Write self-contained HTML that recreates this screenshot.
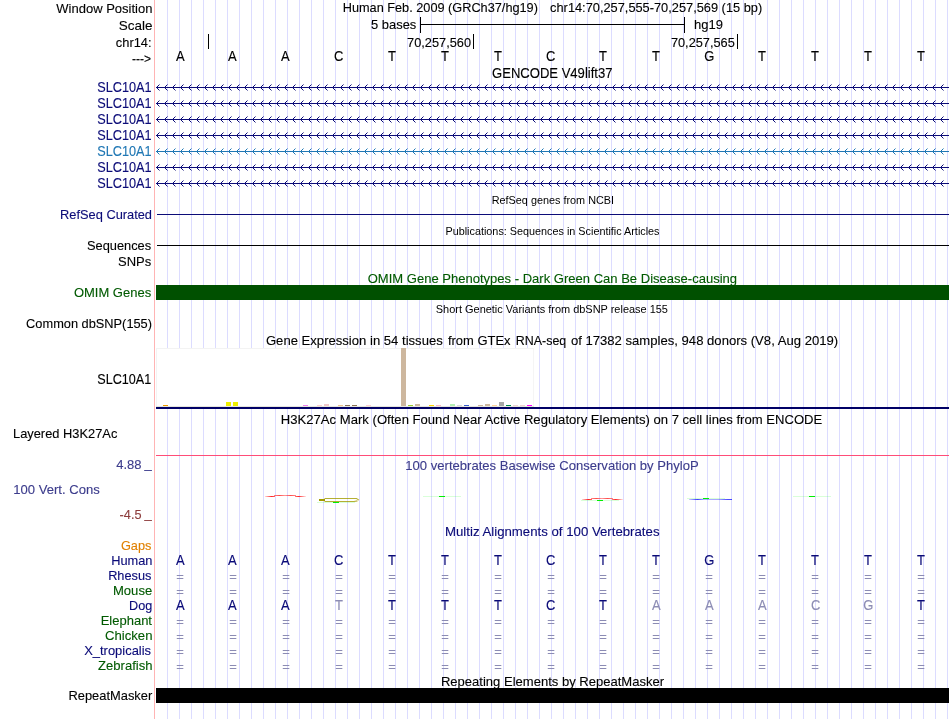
<!DOCTYPE html>
<html lang="en"><head><meta charset="utf-8"><title>UCSC Genome Browser - chr14:70,257,555-70,257,569</title>
<style>
html,body{margin:0;padding:0;background:#fff;overflow:hidden}
svg{display:block;will-change:transform;font-family:"Liberation Sans",sans-serif;font-size:13px}
rect{shape-rendering:crispEdges}
</style></head><body>
<svg role="img" aria-label="UCSC Genome Browser hg19 chr14:70,257,555-70,257,569" width="950" height="719" viewBox="0 0 950 719">
<g id="guides" aria-label="guidelines">
<path d="M167 0V719M179 0V719M191 0V719M203 0V719M215 0V719M227 0V719M239 0V719M251 0V719M263 0V719M275 0V719M287 0V719M299 0V719M311 0V719M323 0V719M335 0V719M347 0V719M359 0V719M371 0V719M383 0V719M395 0V719M407 0V719M419 0V719M431 0V719M443 0V719M455 0V719M467 0V719M479 0V719M491 0V719M503 0V719M515 0V719M527 0V719M539 0V719M551 0V719M563 0V719M575 0V719M587 0V719M599 0V719M611 0V719M623 0V719M635 0V719M647 0V719M659 0V719M671 0V719M683 0V719M695 0V719M707 0V719M719 0V719M731 0V719M743 0V719M755 0V719M767 0V719M779 0V719M791 0V719M803 0V719M815 0V719M827 0V719M839 0V719M851 0V719M863 0V719M875 0V719M887 0V719M899 0V719M911 0V719M923 0V719M935 0V719M947 0V719" stroke="#dcdcff" stroke-width="1" fill="none" transform="translate(.5 0)"/>
<rect x="154" y="0" width="1" height="719" fill="#ffb4b4"/>
</g>
<g id="track-ruler" aria-label="Base Position">
<text x="56.29" y="13" textLength="96.11" lengthAdjust="spacingAndGlyphs" stroke="#000" stroke-width="0.12">Window Position</text>
<text y="12" stroke="#000" stroke-width="0.12"><tspan x="342.70" textLength="195.25" lengthAdjust="spacingAndGlyphs">Human Feb. 2009 (GRCh37/hg19)</tspan> <tspan x="550.10" textLength="212.09" lengthAdjust="spacingAndGlyphs">chr14:70,257,555-70,257,569 (15 bp)</tspan></text>
<text x="118.87" y="30" textLength="33.73" lengthAdjust="spacingAndGlyphs" stroke="#000" stroke-width="0.12">Scale</text>
<text x="371.05" y="29" textLength="45.25" lengthAdjust="spacingAndGlyphs" stroke="#000" stroke-width="0.12">5 bases</text>
<rect x="420" y="24" width="265" height="1" fill="#000"/>
<rect x="420" y="17" width="1" height="16" fill="#000"/>
<rect x="684" y="17" width="1" height="16" fill="#000"/>
<text x="694.00" y="29" textLength="28.92" lengthAdjust="spacingAndGlyphs" stroke="#000" stroke-width="0.12">hg19</text>
<text x="115.86" y="47" textLength="35.74" lengthAdjust="spacingAndGlyphs" stroke="#000" stroke-width="0.12">chr14:</text>
<rect x="208" y="34" width="1" height="15" fill="#000"/>
<text x="407.12" y="47" textLength="63.88" lengthAdjust="spacingAndGlyphs" stroke="#000" stroke-width="0.12">70,257,560</text>
<rect x="473" y="34" width="1" height="15" fill="#000"/>
<text x="670.92" y="47" textLength="63.88" lengthAdjust="spacingAndGlyphs" stroke="#000" stroke-width="0.12">70,257,565</text>
<rect x="737" y="34" width="1" height="15" fill="#000"/>
<text x="132.01" y="63" textLength="18.99" lengthAdjust="spacingAndGlyphs" stroke="#000" stroke-width="0.12">---&gt;</text>
<text transform="translate(176.06 61) scale(1 1.08)" stroke="#000" stroke-width="0.12">A</text>
<text transform="translate(228.06 61) scale(1 1.08)" stroke="#000" stroke-width="0.12">A</text>
<text transform="translate(281.06 61) scale(1 1.08)" stroke="#000" stroke-width="0.12">A</text>
<text transform="translate(334.10 61) scale(1 1.08)" stroke="#000" stroke-width="0.12">C</text>
<text transform="translate(388.02 61) scale(1 1.08)" stroke="#000" stroke-width="0.12">T</text>
<text transform="translate(441.02 61) scale(1 1.08)" stroke="#000" stroke-width="0.12">T</text>
<text transform="translate(494.02 61) scale(1 1.08)" stroke="#000" stroke-width="0.12">T</text>
<text transform="translate(546.10 61) scale(1 1.08)" stroke="#000" stroke-width="0.12">C</text>
<text transform="translate(599.02 61) scale(1 1.08)" stroke="#000" stroke-width="0.12">T</text>
<text transform="translate(652.02 61) scale(1 1.08)" stroke="#000" stroke-width="0.12">T</text>
<text transform="translate(704.14 61) scale(1 1.08)" stroke="#000" stroke-width="0.12">G</text>
<text transform="translate(758.02 61) scale(1 1.08)" stroke="#000" stroke-width="0.12">T</text>
<text transform="translate(811.02 61) scale(1 1.08)" stroke="#000" stroke-width="0.12">T</text>
<text transform="translate(864.02 61) scale(1 1.08)" stroke="#000" stroke-width="0.12">T</text>
<text transform="translate(917.02 61) scale(1 1.08)" stroke="#000" stroke-width="0.12">T</text>
</g>
<g id="track-gencode" aria-label="GENCODE V49lift37">
<text transform="translate(492.03 78) scale(1 1.06)" textLength="120.44" lengthAdjust="spacingAndGlyphs" stroke="#000" stroke-width="0.12">GENCODE V49lift37</text>
<text transform="translate(97.24 92) scale(1 1.06)" textLength="54.26" lengthAdjust="spacingAndGlyphs" fill="#0c0c78" stroke="#0c0c78" stroke-width="0.12">SLC10A1</text>
<rect x="156" y="87" width="793" height="1" fill="#0c0c78"/>
<path d="M159.5 84.5L156.5 87.5L159.5 90.5M167.5 84.5L164.5 87.5L167.5 90.5M175.5 84.5L172.5 87.5L175.5 90.5M183.5 84.5L180.5 87.5L183.5 90.5M191.5 84.5L188.5 87.5L191.5 90.5M199.5 84.5L196.5 87.5L199.5 90.5M207.5 84.5L204.5 87.5L207.5 90.5M215.5 84.5L212.5 87.5L215.5 90.5M223.5 84.5L220.5 87.5L223.5 90.5M231.5 84.5L228.5 87.5L231.5 90.5M239.5 84.5L236.5 87.5L239.5 90.5M247.5 84.5L244.5 87.5L247.5 90.5M255.5 84.5L252.5 87.5L255.5 90.5M263.5 84.5L260.5 87.5L263.5 90.5M271.5 84.5L268.5 87.5L271.5 90.5M279.5 84.5L276.5 87.5L279.5 90.5M287.5 84.5L284.5 87.5L287.5 90.5M295.5 84.5L292.5 87.5L295.5 90.5M303.5 84.5L300.5 87.5L303.5 90.5M311.5 84.5L308.5 87.5L311.5 90.5M319.5 84.5L316.5 87.5L319.5 90.5M327.5 84.5L324.5 87.5L327.5 90.5M335.5 84.5L332.5 87.5L335.5 90.5M343.5 84.5L340.5 87.5L343.5 90.5M351.5 84.5L348.5 87.5L351.5 90.5M359.5 84.5L356.5 87.5L359.5 90.5M367.5 84.5L364.5 87.5L367.5 90.5M375.5 84.5L372.5 87.5L375.5 90.5M383.5 84.5L380.5 87.5L383.5 90.5M391.5 84.5L388.5 87.5L391.5 90.5M399.5 84.5L396.5 87.5L399.5 90.5M407.5 84.5L404.5 87.5L407.5 90.5M415.5 84.5L412.5 87.5L415.5 90.5M423.5 84.5L420.5 87.5L423.5 90.5M431.5 84.5L428.5 87.5L431.5 90.5M439.5 84.5L436.5 87.5L439.5 90.5M447.5 84.5L444.5 87.5L447.5 90.5M455.5 84.5L452.5 87.5L455.5 90.5M463.5 84.5L460.5 87.5L463.5 90.5M471.5 84.5L468.5 87.5L471.5 90.5M479.5 84.5L476.5 87.5L479.5 90.5M487.5 84.5L484.5 87.5L487.5 90.5M495.5 84.5L492.5 87.5L495.5 90.5M503.5 84.5L500.5 87.5L503.5 90.5M511.5 84.5L508.5 87.5L511.5 90.5M519.5 84.5L516.5 87.5L519.5 90.5M527.5 84.5L524.5 87.5L527.5 90.5M535.5 84.5L532.5 87.5L535.5 90.5M543.5 84.5L540.5 87.5L543.5 90.5M551.5 84.5L548.5 87.5L551.5 90.5M559.5 84.5L556.5 87.5L559.5 90.5M567.5 84.5L564.5 87.5L567.5 90.5M575.5 84.5L572.5 87.5L575.5 90.5M583.5 84.5L580.5 87.5L583.5 90.5M591.5 84.5L588.5 87.5L591.5 90.5M599.5 84.5L596.5 87.5L599.5 90.5M607.5 84.5L604.5 87.5L607.5 90.5M615.5 84.5L612.5 87.5L615.5 90.5M623.5 84.5L620.5 87.5L623.5 90.5M631.5 84.5L628.5 87.5L631.5 90.5M639.5 84.5L636.5 87.5L639.5 90.5M647.5 84.5L644.5 87.5L647.5 90.5M655.5 84.5L652.5 87.5L655.5 90.5M663.5 84.5L660.5 87.5L663.5 90.5M671.5 84.5L668.5 87.5L671.5 90.5M679.5 84.5L676.5 87.5L679.5 90.5M687.5 84.5L684.5 87.5L687.5 90.5M695.5 84.5L692.5 87.5L695.5 90.5M703.5 84.5L700.5 87.5L703.5 90.5M711.5 84.5L708.5 87.5L711.5 90.5M719.5 84.5L716.5 87.5L719.5 90.5M727.5 84.5L724.5 87.5L727.5 90.5M735.5 84.5L732.5 87.5L735.5 90.5M743.5 84.5L740.5 87.5L743.5 90.5M751.5 84.5L748.5 87.5L751.5 90.5M759.5 84.5L756.5 87.5L759.5 90.5M767.5 84.5L764.5 87.5L767.5 90.5M775.5 84.5L772.5 87.5L775.5 90.5M783.5 84.5L780.5 87.5L783.5 90.5M791.5 84.5L788.5 87.5L791.5 90.5M799.5 84.5L796.5 87.5L799.5 90.5M807.5 84.5L804.5 87.5L807.5 90.5M815.5 84.5L812.5 87.5L815.5 90.5M823.5 84.5L820.5 87.5L823.5 90.5M831.5 84.5L828.5 87.5L831.5 90.5M839.5 84.5L836.5 87.5L839.5 90.5M847.5 84.5L844.5 87.5L847.5 90.5M855.5 84.5L852.5 87.5L855.5 90.5M863.5 84.5L860.5 87.5L863.5 90.5M871.5 84.5L868.5 87.5L871.5 90.5M879.5 84.5L876.5 87.5L879.5 90.5M887.5 84.5L884.5 87.5L887.5 90.5M895.5 84.5L892.5 87.5L895.5 90.5M903.5 84.5L900.5 87.5L903.5 90.5M911.5 84.5L908.5 87.5L911.5 90.5M919.5 84.5L916.5 87.5L919.5 90.5M927.5 84.5L924.5 87.5L927.5 90.5M935.5 84.5L932.5 87.5L935.5 90.5M943.5 84.5L940.5 87.5L943.5 90.5" stroke="#0c0c78" fill="none"/>
<text transform="translate(97.24 108) scale(1 1.06)" textLength="54.26" lengthAdjust="spacingAndGlyphs" fill="#0c0c78" stroke="#0c0c78" stroke-width="0.12">SLC10A1</text>
<rect x="156" y="103" width="793" height="1" fill="#0c0c78"/>
<path d="M159.5 100.5L156.5 103.5L159.5 106.5M167.5 100.5L164.5 103.5L167.5 106.5M175.5 100.5L172.5 103.5L175.5 106.5M183.5 100.5L180.5 103.5L183.5 106.5M191.5 100.5L188.5 103.5L191.5 106.5M199.5 100.5L196.5 103.5L199.5 106.5M207.5 100.5L204.5 103.5L207.5 106.5M215.5 100.5L212.5 103.5L215.5 106.5M223.5 100.5L220.5 103.5L223.5 106.5M231.5 100.5L228.5 103.5L231.5 106.5M239.5 100.5L236.5 103.5L239.5 106.5M247.5 100.5L244.5 103.5L247.5 106.5M255.5 100.5L252.5 103.5L255.5 106.5M263.5 100.5L260.5 103.5L263.5 106.5M271.5 100.5L268.5 103.5L271.5 106.5M279.5 100.5L276.5 103.5L279.5 106.5M287.5 100.5L284.5 103.5L287.5 106.5M295.5 100.5L292.5 103.5L295.5 106.5M303.5 100.5L300.5 103.5L303.5 106.5M311.5 100.5L308.5 103.5L311.5 106.5M319.5 100.5L316.5 103.5L319.5 106.5M327.5 100.5L324.5 103.5L327.5 106.5M335.5 100.5L332.5 103.5L335.5 106.5M343.5 100.5L340.5 103.5L343.5 106.5M351.5 100.5L348.5 103.5L351.5 106.5M359.5 100.5L356.5 103.5L359.5 106.5M367.5 100.5L364.5 103.5L367.5 106.5M375.5 100.5L372.5 103.5L375.5 106.5M383.5 100.5L380.5 103.5L383.5 106.5M391.5 100.5L388.5 103.5L391.5 106.5M399.5 100.5L396.5 103.5L399.5 106.5M407.5 100.5L404.5 103.5L407.5 106.5M415.5 100.5L412.5 103.5L415.5 106.5M423.5 100.5L420.5 103.5L423.5 106.5M431.5 100.5L428.5 103.5L431.5 106.5M439.5 100.5L436.5 103.5L439.5 106.5M447.5 100.5L444.5 103.5L447.5 106.5M455.5 100.5L452.5 103.5L455.5 106.5M463.5 100.5L460.5 103.5L463.5 106.5M471.5 100.5L468.5 103.5L471.5 106.5M479.5 100.5L476.5 103.5L479.5 106.5M487.5 100.5L484.5 103.5L487.5 106.5M495.5 100.5L492.5 103.5L495.5 106.5M503.5 100.5L500.5 103.5L503.5 106.5M511.5 100.5L508.5 103.5L511.5 106.5M519.5 100.5L516.5 103.5L519.5 106.5M527.5 100.5L524.5 103.5L527.5 106.5M535.5 100.5L532.5 103.5L535.5 106.5M543.5 100.5L540.5 103.5L543.5 106.5M551.5 100.5L548.5 103.5L551.5 106.5M559.5 100.5L556.5 103.5L559.5 106.5M567.5 100.5L564.5 103.5L567.5 106.5M575.5 100.5L572.5 103.5L575.5 106.5M583.5 100.5L580.5 103.5L583.5 106.5M591.5 100.5L588.5 103.5L591.5 106.5M599.5 100.5L596.5 103.5L599.5 106.5M607.5 100.5L604.5 103.5L607.5 106.5M615.5 100.5L612.5 103.5L615.5 106.5M623.5 100.5L620.5 103.5L623.5 106.5M631.5 100.5L628.5 103.5L631.5 106.5M639.5 100.5L636.5 103.5L639.5 106.5M647.5 100.5L644.5 103.5L647.5 106.5M655.5 100.5L652.5 103.5L655.5 106.5M663.5 100.5L660.5 103.5L663.5 106.5M671.5 100.5L668.5 103.5L671.5 106.5M679.5 100.5L676.5 103.5L679.5 106.5M687.5 100.5L684.5 103.5L687.5 106.5M695.5 100.5L692.5 103.5L695.5 106.5M703.5 100.5L700.5 103.5L703.5 106.5M711.5 100.5L708.5 103.5L711.5 106.5M719.5 100.5L716.5 103.5L719.5 106.5M727.5 100.5L724.5 103.5L727.5 106.5M735.5 100.5L732.5 103.5L735.5 106.5M743.5 100.5L740.5 103.5L743.5 106.5M751.5 100.5L748.5 103.5L751.5 106.5M759.5 100.5L756.5 103.5L759.5 106.5M767.5 100.5L764.5 103.5L767.5 106.5M775.5 100.5L772.5 103.5L775.5 106.5M783.5 100.5L780.5 103.5L783.5 106.5M791.5 100.5L788.5 103.5L791.5 106.5M799.5 100.5L796.5 103.5L799.5 106.5M807.5 100.5L804.5 103.5L807.5 106.5M815.5 100.5L812.5 103.5L815.5 106.5M823.5 100.5L820.5 103.5L823.5 106.5M831.5 100.5L828.5 103.5L831.5 106.5M839.5 100.5L836.5 103.5L839.5 106.5M847.5 100.5L844.5 103.5L847.5 106.5M855.5 100.5L852.5 103.5L855.5 106.5M863.5 100.5L860.5 103.5L863.5 106.5M871.5 100.5L868.5 103.5L871.5 106.5M879.5 100.5L876.5 103.5L879.5 106.5M887.5 100.5L884.5 103.5L887.5 106.5M895.5 100.5L892.5 103.5L895.5 106.5M903.5 100.5L900.5 103.5L903.5 106.5M911.5 100.5L908.5 103.5L911.5 106.5M919.5 100.5L916.5 103.5L919.5 106.5M927.5 100.5L924.5 103.5L927.5 106.5M935.5 100.5L932.5 103.5L935.5 106.5M943.5 100.5L940.5 103.5L943.5 106.5" stroke="#0c0c78" fill="none"/>
<text transform="translate(97.24 124) scale(1 1.06)" textLength="54.26" lengthAdjust="spacingAndGlyphs" fill="#0c0c78" stroke="#0c0c78" stroke-width="0.12">SLC10A1</text>
<rect x="156" y="119" width="793" height="1" fill="#0c0c78"/>
<path d="M159.5 116.5L156.5 119.5L159.5 122.5M167.5 116.5L164.5 119.5L167.5 122.5M175.5 116.5L172.5 119.5L175.5 122.5M183.5 116.5L180.5 119.5L183.5 122.5M191.5 116.5L188.5 119.5L191.5 122.5M199.5 116.5L196.5 119.5L199.5 122.5M207.5 116.5L204.5 119.5L207.5 122.5M215.5 116.5L212.5 119.5L215.5 122.5M223.5 116.5L220.5 119.5L223.5 122.5M231.5 116.5L228.5 119.5L231.5 122.5M239.5 116.5L236.5 119.5L239.5 122.5M247.5 116.5L244.5 119.5L247.5 122.5M255.5 116.5L252.5 119.5L255.5 122.5M263.5 116.5L260.5 119.5L263.5 122.5M271.5 116.5L268.5 119.5L271.5 122.5M279.5 116.5L276.5 119.5L279.5 122.5M287.5 116.5L284.5 119.5L287.5 122.5M295.5 116.5L292.5 119.5L295.5 122.5M303.5 116.5L300.5 119.5L303.5 122.5M311.5 116.5L308.5 119.5L311.5 122.5M319.5 116.5L316.5 119.5L319.5 122.5M327.5 116.5L324.5 119.5L327.5 122.5M335.5 116.5L332.5 119.5L335.5 122.5M343.5 116.5L340.5 119.5L343.5 122.5M351.5 116.5L348.5 119.5L351.5 122.5M359.5 116.5L356.5 119.5L359.5 122.5M367.5 116.5L364.5 119.5L367.5 122.5M375.5 116.5L372.5 119.5L375.5 122.5M383.5 116.5L380.5 119.5L383.5 122.5M391.5 116.5L388.5 119.5L391.5 122.5M399.5 116.5L396.5 119.5L399.5 122.5M407.5 116.5L404.5 119.5L407.5 122.5M415.5 116.5L412.5 119.5L415.5 122.5M423.5 116.5L420.5 119.5L423.5 122.5M431.5 116.5L428.5 119.5L431.5 122.5M439.5 116.5L436.5 119.5L439.5 122.5M447.5 116.5L444.5 119.5L447.5 122.5M455.5 116.5L452.5 119.5L455.5 122.5M463.5 116.5L460.5 119.5L463.5 122.5M471.5 116.5L468.5 119.5L471.5 122.5M479.5 116.5L476.5 119.5L479.5 122.5M487.5 116.5L484.5 119.5L487.5 122.5M495.5 116.5L492.5 119.5L495.5 122.5M503.5 116.5L500.5 119.5L503.5 122.5M511.5 116.5L508.5 119.5L511.5 122.5M519.5 116.5L516.5 119.5L519.5 122.5M527.5 116.5L524.5 119.5L527.5 122.5M535.5 116.5L532.5 119.5L535.5 122.5M543.5 116.5L540.5 119.5L543.5 122.5M551.5 116.5L548.5 119.5L551.5 122.5M559.5 116.5L556.5 119.5L559.5 122.5M567.5 116.5L564.5 119.5L567.5 122.5M575.5 116.5L572.5 119.5L575.5 122.5M583.5 116.5L580.5 119.5L583.5 122.5M591.5 116.5L588.5 119.5L591.5 122.5M599.5 116.5L596.5 119.5L599.5 122.5M607.5 116.5L604.5 119.5L607.5 122.5M615.5 116.5L612.5 119.5L615.5 122.5M623.5 116.5L620.5 119.5L623.5 122.5M631.5 116.5L628.5 119.5L631.5 122.5M639.5 116.5L636.5 119.5L639.5 122.5M647.5 116.5L644.5 119.5L647.5 122.5M655.5 116.5L652.5 119.5L655.5 122.5M663.5 116.5L660.5 119.5L663.5 122.5M671.5 116.5L668.5 119.5L671.5 122.5M679.5 116.5L676.5 119.5L679.5 122.5M687.5 116.5L684.5 119.5L687.5 122.5M695.5 116.5L692.5 119.5L695.5 122.5M703.5 116.5L700.5 119.5L703.5 122.5M711.5 116.5L708.5 119.5L711.5 122.5M719.5 116.5L716.5 119.5L719.5 122.5M727.5 116.5L724.5 119.5L727.5 122.5M735.5 116.5L732.5 119.5L735.5 122.5M743.5 116.5L740.5 119.5L743.5 122.5M751.5 116.5L748.5 119.5L751.5 122.5M759.5 116.5L756.5 119.5L759.5 122.5M767.5 116.5L764.5 119.5L767.5 122.5M775.5 116.5L772.5 119.5L775.5 122.5M783.5 116.5L780.5 119.5L783.5 122.5M791.5 116.5L788.5 119.5L791.5 122.5M799.5 116.5L796.5 119.5L799.5 122.5M807.5 116.5L804.5 119.5L807.5 122.5M815.5 116.5L812.5 119.5L815.5 122.5M823.5 116.5L820.5 119.5L823.5 122.5M831.5 116.5L828.5 119.5L831.5 122.5M839.5 116.5L836.5 119.5L839.5 122.5M847.5 116.5L844.5 119.5L847.5 122.5M855.5 116.5L852.5 119.5L855.5 122.5M863.5 116.5L860.5 119.5L863.5 122.5M871.5 116.5L868.5 119.5L871.5 122.5M879.5 116.5L876.5 119.5L879.5 122.5M887.5 116.5L884.5 119.5L887.5 122.5M895.5 116.5L892.5 119.5L895.5 122.5M903.5 116.5L900.5 119.5L903.5 122.5M911.5 116.5L908.5 119.5L911.5 122.5M919.5 116.5L916.5 119.5L919.5 122.5M927.5 116.5L924.5 119.5L927.5 122.5M935.5 116.5L932.5 119.5L935.5 122.5M943.5 116.5L940.5 119.5L943.5 122.5" stroke="#0c0c78" fill="none"/>
<text transform="translate(97.24 140) scale(1 1.06)" textLength="54.26" lengthAdjust="spacingAndGlyphs" fill="#0c0c78" stroke="#0c0c78" stroke-width="0.12">SLC10A1</text>
<rect x="156" y="135" width="793" height="1" fill="#0c0c78"/>
<path d="M159.5 132.5L156.5 135.5L159.5 138.5M167.5 132.5L164.5 135.5L167.5 138.5M175.5 132.5L172.5 135.5L175.5 138.5M183.5 132.5L180.5 135.5L183.5 138.5M191.5 132.5L188.5 135.5L191.5 138.5M199.5 132.5L196.5 135.5L199.5 138.5M207.5 132.5L204.5 135.5L207.5 138.5M215.5 132.5L212.5 135.5L215.5 138.5M223.5 132.5L220.5 135.5L223.5 138.5M231.5 132.5L228.5 135.5L231.5 138.5M239.5 132.5L236.5 135.5L239.5 138.5M247.5 132.5L244.5 135.5L247.5 138.5M255.5 132.5L252.5 135.5L255.5 138.5M263.5 132.5L260.5 135.5L263.5 138.5M271.5 132.5L268.5 135.5L271.5 138.5M279.5 132.5L276.5 135.5L279.5 138.5M287.5 132.5L284.5 135.5L287.5 138.5M295.5 132.5L292.5 135.5L295.5 138.5M303.5 132.5L300.5 135.5L303.5 138.5M311.5 132.5L308.5 135.5L311.5 138.5M319.5 132.5L316.5 135.5L319.5 138.5M327.5 132.5L324.5 135.5L327.5 138.5M335.5 132.5L332.5 135.5L335.5 138.5M343.5 132.5L340.5 135.5L343.5 138.5M351.5 132.5L348.5 135.5L351.5 138.5M359.5 132.5L356.5 135.5L359.5 138.5M367.5 132.5L364.5 135.5L367.5 138.5M375.5 132.5L372.5 135.5L375.5 138.5M383.5 132.5L380.5 135.5L383.5 138.5M391.5 132.5L388.5 135.5L391.5 138.5M399.5 132.5L396.5 135.5L399.5 138.5M407.5 132.5L404.5 135.5L407.5 138.5M415.5 132.5L412.5 135.5L415.5 138.5M423.5 132.5L420.5 135.5L423.5 138.5M431.5 132.5L428.5 135.5L431.5 138.5M439.5 132.5L436.5 135.5L439.5 138.5M447.5 132.5L444.5 135.5L447.5 138.5M455.5 132.5L452.5 135.5L455.5 138.5M463.5 132.5L460.5 135.5L463.5 138.5M471.5 132.5L468.5 135.5L471.5 138.5M479.5 132.5L476.5 135.5L479.5 138.5M487.5 132.5L484.5 135.5L487.5 138.5M495.5 132.5L492.5 135.5L495.5 138.5M503.5 132.5L500.5 135.5L503.5 138.5M511.5 132.5L508.5 135.5L511.5 138.5M519.5 132.5L516.5 135.5L519.5 138.5M527.5 132.5L524.5 135.5L527.5 138.5M535.5 132.5L532.5 135.5L535.5 138.5M543.5 132.5L540.5 135.5L543.5 138.5M551.5 132.5L548.5 135.5L551.5 138.5M559.5 132.5L556.5 135.5L559.5 138.5M567.5 132.5L564.5 135.5L567.5 138.5M575.5 132.5L572.5 135.5L575.5 138.5M583.5 132.5L580.5 135.5L583.5 138.5M591.5 132.5L588.5 135.5L591.5 138.5M599.5 132.5L596.5 135.5L599.5 138.5M607.5 132.5L604.5 135.5L607.5 138.5M615.5 132.5L612.5 135.5L615.5 138.5M623.5 132.5L620.5 135.5L623.5 138.5M631.5 132.5L628.5 135.5L631.5 138.5M639.5 132.5L636.5 135.5L639.5 138.5M647.5 132.5L644.5 135.5L647.5 138.5M655.5 132.5L652.5 135.5L655.5 138.5M663.5 132.5L660.5 135.5L663.5 138.5M671.5 132.5L668.5 135.5L671.5 138.5M679.5 132.5L676.5 135.5L679.5 138.5M687.5 132.5L684.5 135.5L687.5 138.5M695.5 132.5L692.5 135.5L695.5 138.5M703.5 132.5L700.5 135.5L703.5 138.5M711.5 132.5L708.5 135.5L711.5 138.5M719.5 132.5L716.5 135.5L719.5 138.5M727.5 132.5L724.5 135.5L727.5 138.5M735.5 132.5L732.5 135.5L735.5 138.5M743.5 132.5L740.5 135.5L743.5 138.5M751.5 132.5L748.5 135.5L751.5 138.5M759.5 132.5L756.5 135.5L759.5 138.5M767.5 132.5L764.5 135.5L767.5 138.5M775.5 132.5L772.5 135.5L775.5 138.5M783.5 132.5L780.5 135.5L783.5 138.5M791.5 132.5L788.5 135.5L791.5 138.5M799.5 132.5L796.5 135.5L799.5 138.5M807.5 132.5L804.5 135.5L807.5 138.5M815.5 132.5L812.5 135.5L815.5 138.5M823.5 132.5L820.5 135.5L823.5 138.5M831.5 132.5L828.5 135.5L831.5 138.5M839.5 132.5L836.5 135.5L839.5 138.5M847.5 132.5L844.5 135.5L847.5 138.5M855.5 132.5L852.5 135.5L855.5 138.5M863.5 132.5L860.5 135.5L863.5 138.5M871.5 132.5L868.5 135.5L871.5 138.5M879.5 132.5L876.5 135.5L879.5 138.5M887.5 132.5L884.5 135.5L887.5 138.5M895.5 132.5L892.5 135.5L895.5 138.5M903.5 132.5L900.5 135.5L903.5 138.5M911.5 132.5L908.5 135.5L911.5 138.5M919.5 132.5L916.5 135.5L919.5 138.5M927.5 132.5L924.5 135.5L927.5 138.5M935.5 132.5L932.5 135.5L935.5 138.5M943.5 132.5L940.5 135.5L943.5 138.5" stroke="#0c0c78" fill="none"/>
<text transform="translate(97.24 156) scale(1 1.06)" textLength="54.26" lengthAdjust="spacingAndGlyphs" fill="#1f77b4" stroke="#1f77b4" stroke-width="0.12">SLC10A1</text>
<rect x="156" y="151" width="793" height="1" fill="#1f77b4"/>
<path d="M159.5 148.5L156.5 151.5L159.5 154.5M167.5 148.5L164.5 151.5L167.5 154.5M175.5 148.5L172.5 151.5L175.5 154.5M183.5 148.5L180.5 151.5L183.5 154.5M191.5 148.5L188.5 151.5L191.5 154.5M199.5 148.5L196.5 151.5L199.5 154.5M207.5 148.5L204.5 151.5L207.5 154.5M215.5 148.5L212.5 151.5L215.5 154.5M223.5 148.5L220.5 151.5L223.5 154.5M231.5 148.5L228.5 151.5L231.5 154.5M239.5 148.5L236.5 151.5L239.5 154.5M247.5 148.5L244.5 151.5L247.5 154.5M255.5 148.5L252.5 151.5L255.5 154.5M263.5 148.5L260.5 151.5L263.5 154.5M271.5 148.5L268.5 151.5L271.5 154.5M279.5 148.5L276.5 151.5L279.5 154.5M287.5 148.5L284.5 151.5L287.5 154.5M295.5 148.5L292.5 151.5L295.5 154.5M303.5 148.5L300.5 151.5L303.5 154.5M311.5 148.5L308.5 151.5L311.5 154.5M319.5 148.5L316.5 151.5L319.5 154.5M327.5 148.5L324.5 151.5L327.5 154.5M335.5 148.5L332.5 151.5L335.5 154.5M343.5 148.5L340.5 151.5L343.5 154.5M351.5 148.5L348.5 151.5L351.5 154.5M359.5 148.5L356.5 151.5L359.5 154.5M367.5 148.5L364.5 151.5L367.5 154.5M375.5 148.5L372.5 151.5L375.5 154.5M383.5 148.5L380.5 151.5L383.5 154.5M391.5 148.5L388.5 151.5L391.5 154.5M399.5 148.5L396.5 151.5L399.5 154.5M407.5 148.5L404.5 151.5L407.5 154.5M415.5 148.5L412.5 151.5L415.5 154.5M423.5 148.5L420.5 151.5L423.5 154.5M431.5 148.5L428.5 151.5L431.5 154.5M439.5 148.5L436.5 151.5L439.5 154.5M447.5 148.5L444.5 151.5L447.5 154.5M455.5 148.5L452.5 151.5L455.5 154.5M463.5 148.5L460.5 151.5L463.5 154.5M471.5 148.5L468.5 151.5L471.5 154.5M479.5 148.5L476.5 151.5L479.5 154.5M487.5 148.5L484.5 151.5L487.5 154.5M495.5 148.5L492.5 151.5L495.5 154.5M503.5 148.5L500.5 151.5L503.5 154.5M511.5 148.5L508.5 151.5L511.5 154.5M519.5 148.5L516.5 151.5L519.5 154.5M527.5 148.5L524.5 151.5L527.5 154.5M535.5 148.5L532.5 151.5L535.5 154.5M543.5 148.5L540.5 151.5L543.5 154.5M551.5 148.5L548.5 151.5L551.5 154.5M559.5 148.5L556.5 151.5L559.5 154.5M567.5 148.5L564.5 151.5L567.5 154.5M575.5 148.5L572.5 151.5L575.5 154.5M583.5 148.5L580.5 151.5L583.5 154.5M591.5 148.5L588.5 151.5L591.5 154.5M599.5 148.5L596.5 151.5L599.5 154.5M607.5 148.5L604.5 151.5L607.5 154.5M615.5 148.5L612.5 151.5L615.5 154.5M623.5 148.5L620.5 151.5L623.5 154.5M631.5 148.5L628.5 151.5L631.5 154.5M639.5 148.5L636.5 151.5L639.5 154.5M647.5 148.5L644.5 151.5L647.5 154.5M655.5 148.5L652.5 151.5L655.5 154.5M663.5 148.5L660.5 151.5L663.5 154.5M671.5 148.5L668.5 151.5L671.5 154.5M679.5 148.5L676.5 151.5L679.5 154.5M687.5 148.5L684.5 151.5L687.5 154.5M695.5 148.5L692.5 151.5L695.5 154.5M703.5 148.5L700.5 151.5L703.5 154.5M711.5 148.5L708.5 151.5L711.5 154.5M719.5 148.5L716.5 151.5L719.5 154.5M727.5 148.5L724.5 151.5L727.5 154.5M735.5 148.5L732.5 151.5L735.5 154.5M743.5 148.5L740.5 151.5L743.5 154.5M751.5 148.5L748.5 151.5L751.5 154.5M759.5 148.5L756.5 151.5L759.5 154.5M767.5 148.5L764.5 151.5L767.5 154.5M775.5 148.5L772.5 151.5L775.5 154.5M783.5 148.5L780.5 151.5L783.5 154.5M791.5 148.5L788.5 151.5L791.5 154.5M799.5 148.5L796.5 151.5L799.5 154.5M807.5 148.5L804.5 151.5L807.5 154.5M815.5 148.5L812.5 151.5L815.5 154.5M823.5 148.5L820.5 151.5L823.5 154.5M831.5 148.5L828.5 151.5L831.5 154.5M839.5 148.5L836.5 151.5L839.5 154.5M847.5 148.5L844.5 151.5L847.5 154.5M855.5 148.5L852.5 151.5L855.5 154.5M863.5 148.5L860.5 151.5L863.5 154.5M871.5 148.5L868.5 151.5L871.5 154.5M879.5 148.5L876.5 151.5L879.5 154.5M887.5 148.5L884.5 151.5L887.5 154.5M895.5 148.5L892.5 151.5L895.5 154.5M903.5 148.5L900.5 151.5L903.5 154.5M911.5 148.5L908.5 151.5L911.5 154.5M919.5 148.5L916.5 151.5L919.5 154.5M927.5 148.5L924.5 151.5L927.5 154.5M935.5 148.5L932.5 151.5L935.5 154.5M943.5 148.5L940.5 151.5L943.5 154.5" stroke="#1f77b4" fill="none"/>
<text transform="translate(97.24 172) scale(1 1.06)" textLength="54.26" lengthAdjust="spacingAndGlyphs" fill="#0c0c78" stroke="#0c0c78" stroke-width="0.12">SLC10A1</text>
<rect x="156" y="167" width="793" height="1" fill="#0c0c78"/>
<path d="M159.5 164.5L156.5 167.5L159.5 170.5M167.5 164.5L164.5 167.5L167.5 170.5M175.5 164.5L172.5 167.5L175.5 170.5M183.5 164.5L180.5 167.5L183.5 170.5M191.5 164.5L188.5 167.5L191.5 170.5M199.5 164.5L196.5 167.5L199.5 170.5M207.5 164.5L204.5 167.5L207.5 170.5M215.5 164.5L212.5 167.5L215.5 170.5M223.5 164.5L220.5 167.5L223.5 170.5M231.5 164.5L228.5 167.5L231.5 170.5M239.5 164.5L236.5 167.5L239.5 170.5M247.5 164.5L244.5 167.5L247.5 170.5M255.5 164.5L252.5 167.5L255.5 170.5M263.5 164.5L260.5 167.5L263.5 170.5M271.5 164.5L268.5 167.5L271.5 170.5M279.5 164.5L276.5 167.5L279.5 170.5M287.5 164.5L284.5 167.5L287.5 170.5M295.5 164.5L292.5 167.5L295.5 170.5M303.5 164.5L300.5 167.5L303.5 170.5M311.5 164.5L308.5 167.5L311.5 170.5M319.5 164.5L316.5 167.5L319.5 170.5M327.5 164.5L324.5 167.5L327.5 170.5M335.5 164.5L332.5 167.5L335.5 170.5M343.5 164.5L340.5 167.5L343.5 170.5M351.5 164.5L348.5 167.5L351.5 170.5M359.5 164.5L356.5 167.5L359.5 170.5M367.5 164.5L364.5 167.5L367.5 170.5M375.5 164.5L372.5 167.5L375.5 170.5M383.5 164.5L380.5 167.5L383.5 170.5M391.5 164.5L388.5 167.5L391.5 170.5M399.5 164.5L396.5 167.5L399.5 170.5M407.5 164.5L404.5 167.5L407.5 170.5M415.5 164.5L412.5 167.5L415.5 170.5M423.5 164.5L420.5 167.5L423.5 170.5M431.5 164.5L428.5 167.5L431.5 170.5M439.5 164.5L436.5 167.5L439.5 170.5M447.5 164.5L444.5 167.5L447.5 170.5M455.5 164.5L452.5 167.5L455.5 170.5M463.5 164.5L460.5 167.5L463.5 170.5M471.5 164.5L468.5 167.5L471.5 170.5M479.5 164.5L476.5 167.5L479.5 170.5M487.5 164.5L484.5 167.5L487.5 170.5M495.5 164.5L492.5 167.5L495.5 170.5M503.5 164.5L500.5 167.5L503.5 170.5M511.5 164.5L508.5 167.5L511.5 170.5M519.5 164.5L516.5 167.5L519.5 170.5M527.5 164.5L524.5 167.5L527.5 170.5M535.5 164.5L532.5 167.5L535.5 170.5M543.5 164.5L540.5 167.5L543.5 170.5M551.5 164.5L548.5 167.5L551.5 170.5M559.5 164.5L556.5 167.5L559.5 170.5M567.5 164.5L564.5 167.5L567.5 170.5M575.5 164.5L572.5 167.5L575.5 170.5M583.5 164.5L580.5 167.5L583.5 170.5M591.5 164.5L588.5 167.5L591.5 170.5M599.5 164.5L596.5 167.5L599.5 170.5M607.5 164.5L604.5 167.5L607.5 170.5M615.5 164.5L612.5 167.5L615.5 170.5M623.5 164.5L620.5 167.5L623.5 170.5M631.5 164.5L628.5 167.5L631.5 170.5M639.5 164.5L636.5 167.5L639.5 170.5M647.5 164.5L644.5 167.5L647.5 170.5M655.5 164.5L652.5 167.5L655.5 170.5M663.5 164.5L660.5 167.5L663.5 170.5M671.5 164.5L668.5 167.5L671.5 170.5M679.5 164.5L676.5 167.5L679.5 170.5M687.5 164.5L684.5 167.5L687.5 170.5M695.5 164.5L692.5 167.5L695.5 170.5M703.5 164.5L700.5 167.5L703.5 170.5M711.5 164.5L708.5 167.5L711.5 170.5M719.5 164.5L716.5 167.5L719.5 170.5M727.5 164.5L724.5 167.5L727.5 170.5M735.5 164.5L732.5 167.5L735.5 170.5M743.5 164.5L740.5 167.5L743.5 170.5M751.5 164.5L748.5 167.5L751.5 170.5M759.5 164.5L756.5 167.5L759.5 170.5M767.5 164.5L764.5 167.5L767.5 170.5M775.5 164.5L772.5 167.5L775.5 170.5M783.5 164.5L780.5 167.5L783.5 170.5M791.5 164.5L788.5 167.5L791.5 170.5M799.5 164.5L796.5 167.5L799.5 170.5M807.5 164.5L804.5 167.5L807.5 170.5M815.5 164.5L812.5 167.5L815.5 170.5M823.5 164.5L820.5 167.5L823.5 170.5M831.5 164.5L828.5 167.5L831.5 170.5M839.5 164.5L836.5 167.5L839.5 170.5M847.5 164.5L844.5 167.5L847.5 170.5M855.5 164.5L852.5 167.5L855.5 170.5M863.5 164.5L860.5 167.5L863.5 170.5M871.5 164.5L868.5 167.5L871.5 170.5M879.5 164.5L876.5 167.5L879.5 170.5M887.5 164.5L884.5 167.5L887.5 170.5M895.5 164.5L892.5 167.5L895.5 170.5M903.5 164.5L900.5 167.5L903.5 170.5M911.5 164.5L908.5 167.5L911.5 170.5M919.5 164.5L916.5 167.5L919.5 170.5M927.5 164.5L924.5 167.5L927.5 170.5M935.5 164.5L932.5 167.5L935.5 170.5M943.5 164.5L940.5 167.5L943.5 170.5" stroke="#0c0c78" fill="none"/>
<text transform="translate(97.24 188) scale(1 1.06)" textLength="54.26" lengthAdjust="spacingAndGlyphs" fill="#0c0c78" stroke="#0c0c78" stroke-width="0.12">SLC10A1</text>
<rect x="156" y="183" width="793" height="1" fill="#0c0c78"/>
<path d="M159.5 180.5L156.5 183.5L159.5 186.5M167.5 180.5L164.5 183.5L167.5 186.5M175.5 180.5L172.5 183.5L175.5 186.5M183.5 180.5L180.5 183.5L183.5 186.5M191.5 180.5L188.5 183.5L191.5 186.5M199.5 180.5L196.5 183.5L199.5 186.5M207.5 180.5L204.5 183.5L207.5 186.5M215.5 180.5L212.5 183.5L215.5 186.5M223.5 180.5L220.5 183.5L223.5 186.5M231.5 180.5L228.5 183.5L231.5 186.5M239.5 180.5L236.5 183.5L239.5 186.5M247.5 180.5L244.5 183.5L247.5 186.5M255.5 180.5L252.5 183.5L255.5 186.5M263.5 180.5L260.5 183.5L263.5 186.5M271.5 180.5L268.5 183.5L271.5 186.5M279.5 180.5L276.5 183.5L279.5 186.5M287.5 180.5L284.5 183.5L287.5 186.5M295.5 180.5L292.5 183.5L295.5 186.5M303.5 180.5L300.5 183.5L303.5 186.5M311.5 180.5L308.5 183.5L311.5 186.5M319.5 180.5L316.5 183.5L319.5 186.5M327.5 180.5L324.5 183.5L327.5 186.5M335.5 180.5L332.5 183.5L335.5 186.5M343.5 180.5L340.5 183.5L343.5 186.5M351.5 180.5L348.5 183.5L351.5 186.5M359.5 180.5L356.5 183.5L359.5 186.5M367.5 180.5L364.5 183.5L367.5 186.5M375.5 180.5L372.5 183.5L375.5 186.5M383.5 180.5L380.5 183.5L383.5 186.5M391.5 180.5L388.5 183.5L391.5 186.5M399.5 180.5L396.5 183.5L399.5 186.5M407.5 180.5L404.5 183.5L407.5 186.5M415.5 180.5L412.5 183.5L415.5 186.5M423.5 180.5L420.5 183.5L423.5 186.5M431.5 180.5L428.5 183.5L431.5 186.5M439.5 180.5L436.5 183.5L439.5 186.5M447.5 180.5L444.5 183.5L447.5 186.5M455.5 180.5L452.5 183.5L455.5 186.5M463.5 180.5L460.5 183.5L463.5 186.5M471.5 180.5L468.5 183.5L471.5 186.5M479.5 180.5L476.5 183.5L479.5 186.5M487.5 180.5L484.5 183.5L487.5 186.5M495.5 180.5L492.5 183.5L495.5 186.5M503.5 180.5L500.5 183.5L503.5 186.5M511.5 180.5L508.5 183.5L511.5 186.5M519.5 180.5L516.5 183.5L519.5 186.5M527.5 180.5L524.5 183.5L527.5 186.5M535.5 180.5L532.5 183.5L535.5 186.5M543.5 180.5L540.5 183.5L543.5 186.5M551.5 180.5L548.5 183.5L551.5 186.5M559.5 180.5L556.5 183.5L559.5 186.5M567.5 180.5L564.5 183.5L567.5 186.5M575.5 180.5L572.5 183.5L575.5 186.5M583.5 180.5L580.5 183.5L583.5 186.5M591.5 180.5L588.5 183.5L591.5 186.5M599.5 180.5L596.5 183.5L599.5 186.5M607.5 180.5L604.5 183.5L607.5 186.5M615.5 180.5L612.5 183.5L615.5 186.5M623.5 180.5L620.5 183.5L623.5 186.5M631.5 180.5L628.5 183.5L631.5 186.5M639.5 180.5L636.5 183.5L639.5 186.5M647.5 180.5L644.5 183.5L647.5 186.5M655.5 180.5L652.5 183.5L655.5 186.5M663.5 180.5L660.5 183.5L663.5 186.5M671.5 180.5L668.5 183.5L671.5 186.5M679.5 180.5L676.5 183.5L679.5 186.5M687.5 180.5L684.5 183.5L687.5 186.5M695.5 180.5L692.5 183.5L695.5 186.5M703.5 180.5L700.5 183.5L703.5 186.5M711.5 180.5L708.5 183.5L711.5 186.5M719.5 180.5L716.5 183.5L719.5 186.5M727.5 180.5L724.5 183.5L727.5 186.5M735.5 180.5L732.5 183.5L735.5 186.5M743.5 180.5L740.5 183.5L743.5 186.5M751.5 180.5L748.5 183.5L751.5 186.5M759.5 180.5L756.5 183.5L759.5 186.5M767.5 180.5L764.5 183.5L767.5 186.5M775.5 180.5L772.5 183.5L775.5 186.5M783.5 180.5L780.5 183.5L783.5 186.5M791.5 180.5L788.5 183.5L791.5 186.5M799.5 180.5L796.5 183.5L799.5 186.5M807.5 180.5L804.5 183.5L807.5 186.5M815.5 180.5L812.5 183.5L815.5 186.5M823.5 180.5L820.5 183.5L823.5 186.5M831.5 180.5L828.5 183.5L831.5 186.5M839.5 180.5L836.5 183.5L839.5 186.5M847.5 180.5L844.5 183.5L847.5 186.5M855.5 180.5L852.5 183.5L855.5 186.5M863.5 180.5L860.5 183.5L863.5 186.5M871.5 180.5L868.5 183.5L871.5 186.5M879.5 180.5L876.5 183.5L879.5 186.5M887.5 180.5L884.5 183.5L887.5 186.5M895.5 180.5L892.5 183.5L895.5 186.5M903.5 180.5L900.5 183.5L903.5 186.5M911.5 180.5L908.5 183.5L911.5 186.5M919.5 180.5L916.5 183.5L919.5 186.5M927.5 180.5L924.5 183.5L927.5 186.5M935.5 180.5L932.5 183.5L935.5 186.5M943.5 180.5L940.5 183.5L943.5 186.5" stroke="#0c0c78" fill="none"/>
</g>
<g id="track-refseq" aria-label="RefSeq genes from NCBI">
<text x="491.74" y="204" textLength="122.33" lengthAdjust="spacingAndGlyphs" font-size="11">RefSeq genes from NCBI</text>
<text x="60.07" y="219" textLength="91.93" lengthAdjust="spacingAndGlyphs" fill="#0c0c78" stroke="#0c0c78" stroke-width="0.12">RefSeq Curated</text>
<rect x="157" y="214" width="792" height="1" fill="#0c0c78"/>
</g>
<g id="track-pubs" aria-label="Publications">
<text x="445.46" y="235" textLength="214.07" lengthAdjust="spacingAndGlyphs" font-size="11">Publications: Sequences in Scientific Articles</text>
<text x="86.94" y="250" textLength="64.21" lengthAdjust="spacingAndGlyphs" stroke="#000" stroke-width="0.12">Sequences</text>
<rect x="157" y="245" width="792" height="1" fill="#000"/>
<text x="117.97" y="266" textLength="33.18" lengthAdjust="spacingAndGlyphs" stroke="#000" stroke-width="0.12">SNPs</text>
</g>
<g id="track-omim" aria-label="OMIM Genes">
<text x="367.74" y="283" textLength="369.32" lengthAdjust="spacingAndGlyphs" fill="#005a00" stroke="#005a00" stroke-width="0.12">OMIM Gene Phenotypes - Dark Green Can Be Disease-causing</text>
<text x="73.90" y="297" textLength="77.25" lengthAdjust="spacingAndGlyphs" fill="#005a00" stroke="#005a00" stroke-width="0.12">OMIM Genes</text>
<rect x="156" y="285" width="793" height="15" fill="#005000"/>
</g>
<g id="track-dbsnp" aria-label="Common dbSNP(155)">
<text x="435.81" y="313" textLength="232.17" lengthAdjust="spacingAndGlyphs" font-size="11">Short Genetic Variants from dbSNP release 155</text>
<text x="26.11" y="328" textLength="125.89" lengthAdjust="spacingAndGlyphs" stroke="#000" stroke-width="0.12">Common dbSNP(155)</text>
</g>
<g id="track-gtex" aria-label="GTEx Gene Expression">
<text y="345" stroke="#000" stroke-width="0.12"><tspan x="265.94" textLength="176.81" lengthAdjust="spacingAndGlyphs">Gene Expression in 54 tissues</tspan> <tspan x="447.95" textLength="62.58" lengthAdjust="spacingAndGlyphs">from GTEx</tspan> <tspan x="515.84" textLength="50.46" lengthAdjust="spacingAndGlyphs">RNA-seq</tspan> <tspan x="570.90" textLength="267.25" lengthAdjust="spacingAndGlyphs">of 17382 samples, 948 donors (V8, Aug 2019)</tspan></text>
<rect x="156" y="348" width="378" height="59" fill="#fff"/>
<rect x="156" y="348" width="378" height="1" fill="#f3f3f3"/>
<rect x="156" y="348" width="1" height="59" fill="#f3f3f3"/>
<rect x="533" y="348" width="1" height="59" fill="#f5f5f5"/>
<rect x="156" y="406" width="378" height="1" fill="#e6e6dc"/>
<rect x="163" y="405" width="5" height="1" fill="#ee9a00"/>
<rect x="226" y="402" width="5" height="4" fill="#eeee00"/>
<rect x="233" y="402" width="5" height="4" fill="#eeee00"/>
<rect x="303" y="405" width="5" height="1" fill="#ee82ee"/>
<rect x="317" y="405" width="5" height="1" fill="#ffd0d0"/>
<rect x="324" y="404" width="5" height="2" fill="#f0c8c8"/>
<rect x="338" y="405" width="5" height="1" fill="#eec591"/>
<rect x="345" y="405" width="5" height="1" fill="#8b7355"/>
<rect x="352" y="405" width="5" height="1" fill="#8b7355"/>
<rect x="366" y="405" width="5" height="1" fill="#ffd0d0"/>
<rect x="401" y="348" width="5" height="58" fill="#cdb79e"/>
<rect x="408" y="405" width="5" height="1" fill="#9acd32"/>
<rect x="415" y="404" width="5" height="2" fill="#cdb79e"/>
<rect x="429" y="405" width="5" height="1" fill="#ffd700"/>
<rect x="436" y="405" width="5" height="1" fill="#ffb6c1"/>
<rect x="450" y="404" width="5" height="2" fill="#b4eeb4"/>
<rect x="457" y="405" width="5" height="1" fill="#d9d9d9"/>
<rect x="464" y="405" width="5" height="1" fill="#3a5fcd"/>
<rect x="478" y="405" width="5" height="1" fill="#cdb79e"/>
<rect x="485" y="404" width="5" height="2" fill="#cdb79e"/>
<rect x="492" y="405" width="5" height="1" fill="#ffd39b"/>
<rect x="499" y="402" width="5" height="4" fill="#a6a6a6"/>
<rect x="506" y="405" width="5" height="1" fill="#008b45"/>
<rect x="513" y="405" width="5" height="1" fill="#eed5d2"/>
<rect x="520" y="405" width="5" height="1" fill="#eed5d2"/>
<rect x="527" y="405" width="5" height="1" fill="#ff00ff"/>
<text transform="translate(97.34 384) scale(1 1.06)" textLength="53.86" lengthAdjust="spacingAndGlyphs" stroke="#000" stroke-width="0.12">SLC10A1</text>
<rect x="156" y="407" width="793" height="2" fill="#000066"/>
</g>
<g id="track-h3k27ac" aria-label="Layered H3K27Ac">
<text x="280.83" y="424" textLength="541.45" lengthAdjust="spacingAndGlyphs" stroke="#000" stroke-width="0.12">H3K27Ac Mark (Often Found Near Active Regulatory Elements) on 7 cell lines from ENCODE</text>
<text x="13.00" y="438" textLength="104.32" lengthAdjust="spacingAndGlyphs" stroke="#000" stroke-width="0.12">Layered H3K27Ac</text>
<rect x="156" y="455" width="793" height="1" fill="#ff4d78"/>
</g>
<g id="track-phylop" aria-label="100 Vert. Cons">
<text y="469.2" fill="#3c3c8c" stroke="#3c3c8c" stroke-width="0.12"><tspan x="116.19" textLength="25.31" lengthAdjust="spacingAndGlyphs">4.88</tspan> <tspan x="144.60" y="467.5">_</tspan></text>
<text x="405.33" y="470" textLength="293.34" lengthAdjust="spacingAndGlyphs" fill="#3c3c8c" stroke="#3c3c8c" stroke-width="0.12">100 vertebrates Basewise Conservation by PhyloP</text>
<text x="13.30" y="494" textLength="86.50" lengthAdjust="spacingAndGlyphs" fill="#3c3c8c" stroke="#3c3c8c" stroke-width="0.12">100 Vert. Cons</text>
<text y="519" fill="#8c3c3c" stroke="#8c3c3c" stroke-width="0.12"><tspan x="119.59" textLength="21.91" lengthAdjust="spacingAndGlyphs">-4.5</tspan> <tspan x="144.60" y="518.1">_</tspan></text>
<defs><linearGradient id="fl"><stop offset="0" stop-color="#f00" stop-opacity=".15"/><stop offset=".65" stop-color="#f00" stop-opacity=".85"/><stop offset="1" stop-color="#f00" stop-opacity=".6"/></linearGradient><linearGradient id="fr"><stop offset="0" stop-color="#f00" stop-opacity=".5"/><stop offset=".35" stop-color="#f00" stop-opacity=".85"/><stop offset="1" stop-color="#f00" stop-opacity=".15"/></linearGradient><linearGradient id="fm"><stop offset="0" stop-color="#f00" stop-opacity=".45"/><stop offset=".25" stop-color="#f00" stop-opacity=".7"/><stop offset=".5" stop-color="#f00" stop-opacity=".4"/><stop offset=".75" stop-color="#f00" stop-opacity=".7"/><stop offset="1" stop-color="#f00" stop-opacity=".45"/></linearGradient><linearGradient id="bl"><stop offset="0" stop-color="#00f" stop-opacity=".2"/><stop offset=".2" stop-color="#00f" stop-opacity=".75"/><stop offset=".35" stop-color="#00f" stop-opacity=".3"/><stop offset=".7" stop-color="#00f" stop-opacity=".35"/><stop offset=".9" stop-color="#00f" stop-opacity=".7"/><stop offset="1" stop-color="#00f" stop-opacity=".7"/></linearGradient></defs>
<rect x="265" y="496" width="10" height="1" fill="url(#fl)"/>
<rect x="274" y="495" width="22" height="1" fill="url(#fm)"/>
<rect x="295" y="496" width="10.5" height="1" fill="url(#fr)"/>
<path d="M324.5 498.55H356.5L359 500.1M324.5 501.5H354L357.5 500.9" stroke="#a39b00" stroke-width="1.1" fill="none" opacity=".8"/>
<rect x="319" y="499" width="6" height="2" fill="#a39b00"/>
<rect x="317" y="502" width="38" height="1" fill="#00ff00" opacity="0.15"/>
<rect x="333" y="502" width="6" height="1" fill="#00ee00"/>
<rect x="423" y="496" width="38" height="1" fill="#00ff00" opacity="0.15"/>
<rect x="439" y="496" width="6" height="1" fill="#00ee00"/>
<rect x="582" y="499" width="10" height="1" fill="url(#fl)"/>
<rect x="591" y="498" width="22" height="1" fill="url(#fm)"/>
<rect x="612" y="499" width="10.5" height="1" fill="url(#fr)"/>
<rect x="581" y="500" width="38" height="1" fill="#00ff00" opacity="0.15"/>
<rect x="597" y="500" width="6" height="1" fill="#00ee00"/>
<rect x="689" y="499" width="43" height="1" fill="url(#bl)"/>
<rect x="687" y="498" width="38" height="1" fill="#00ff00" opacity="0.15"/>
<rect x="703" y="498" width="6" height="1" fill="#00ee00"/>
<rect x="793" y="496" width="38" height="1" fill="#00ff00" opacity="0.15"/>
<rect x="809" y="496" width="6" height="1" fill="#00ee00"/>
</g>
<g id="track-multiz" aria-label="Multiz Alignments">
<text x="444.99" y="536" textLength="214.52" lengthAdjust="spacingAndGlyphs" fill="#0a0a78" stroke="#0a0a78" stroke-width="0.12">Multiz Alignments of 100 Vertebrates</text>
<text x="120.92" y="550" textLength="30.48" lengthAdjust="spacingAndGlyphs" fill="#e08000" stroke="#e08000" stroke-width="0.12">Gaps</text>
<text x="111.18" y="565" textLength="41.32" lengthAdjust="spacingAndGlyphs" fill="#0a0a78" stroke="#0a0a78" stroke-width="0.12">Human</text>
<text transform="translate(176.06 565) scale(1 1.08)" fill="#0a0a78" stroke="#0a0a78" stroke-width="0.12">A</text>
<text transform="translate(228.06 565) scale(1 1.08)" fill="#0a0a78" stroke="#0a0a78" stroke-width="0.12">A</text>
<text transform="translate(281.06 565) scale(1 1.08)" fill="#0a0a78" stroke="#0a0a78" stroke-width="0.12">A</text>
<text transform="translate(334.10 565) scale(1 1.08)" fill="#0a0a78" stroke="#0a0a78" stroke-width="0.12">C</text>
<text transform="translate(388.02 565) scale(1 1.08)" fill="#0a0a78" stroke="#0a0a78" stroke-width="0.12">T</text>
<text transform="translate(441.02 565) scale(1 1.08)" fill="#0a0a78" stroke="#0a0a78" stroke-width="0.12">T</text>
<text transform="translate(494.02 565) scale(1 1.08)" fill="#0a0a78" stroke="#0a0a78" stroke-width="0.12">T</text>
<text transform="translate(546.10 565) scale(1 1.08)" fill="#0a0a78" stroke="#0a0a78" stroke-width="0.12">C</text>
<text transform="translate(599.02 565) scale(1 1.08)" fill="#0a0a78" stroke="#0a0a78" stroke-width="0.12">T</text>
<text transform="translate(652.02 565) scale(1 1.08)" fill="#0a0a78" stroke="#0a0a78" stroke-width="0.12">T</text>
<text transform="translate(704.14 565) scale(1 1.08)" fill="#0a0a78" stroke="#0a0a78" stroke-width="0.12">G</text>
<text transform="translate(758.02 565) scale(1 1.08)" fill="#0a0a78" stroke="#0a0a78" stroke-width="0.12">T</text>
<text transform="translate(811.02 565) scale(1 1.08)" fill="#0a0a78" stroke="#0a0a78" stroke-width="0.12">T</text>
<text transform="translate(864.02 565) scale(1 1.08)" fill="#0a0a78" stroke="#0a0a78" stroke-width="0.12">T</text>
<text transform="translate(917.02 565) scale(1 1.08)" fill="#0a0a78" stroke="#0a0a78" stroke-width="0.12">T</text>
<text x="108.17" y="580" textLength="43.23" lengthAdjust="spacingAndGlyphs" fill="#0a0a78" stroke="#0a0a78" stroke-width="0.12">Rhesus</text>
<text x="176.30" y="581" fill="#8c8cb4" stroke="#8c8cb4" stroke-width="0.12">=</text>
<text x="229.30" y="581" fill="#8c8cb4" stroke="#8c8cb4" stroke-width="0.12">=</text>
<text x="282.30" y="581" fill="#8c8cb4" stroke="#8c8cb4" stroke-width="0.12">=</text>
<text x="335.30" y="581" fill="#8c8cb4" stroke="#8c8cb4" stroke-width="0.12">=</text>
<text x="388.30" y="581" fill="#8c8cb4" stroke="#8c8cb4" stroke-width="0.12">=</text>
<text x="441.30" y="581" fill="#8c8cb4" stroke="#8c8cb4" stroke-width="0.12">=</text>
<text x="494.30" y="581" fill="#8c8cb4" stroke="#8c8cb4" stroke-width="0.12">=</text>
<text x="547.30" y="581" fill="#8c8cb4" stroke="#8c8cb4" stroke-width="0.12">=</text>
<text x="599.30" y="581" fill="#8c8cb4" stroke="#8c8cb4" stroke-width="0.12">=</text>
<text x="652.30" y="581" fill="#8c8cb4" stroke="#8c8cb4" stroke-width="0.12">=</text>
<text x="705.30" y="581" fill="#8c8cb4" stroke="#8c8cb4" stroke-width="0.12">=</text>
<text x="758.30" y="581" fill="#8c8cb4" stroke="#8c8cb4" stroke-width="0.12">=</text>
<text x="811.30" y="581" fill="#8c8cb4" stroke="#8c8cb4" stroke-width="0.12">=</text>
<text x="864.30" y="581" fill="#8c8cb4" stroke="#8c8cb4" stroke-width="0.12">=</text>
<text x="917.30" y="581" fill="#8c8cb4" stroke="#8c8cb4" stroke-width="0.12">=</text>
<text x="112.97" y="595" textLength="39.23" lengthAdjust="spacingAndGlyphs" fill="#005a00" stroke="#005a00" stroke-width="0.12">Mouse</text>
<text x="176.30" y="596" fill="#8c8cb4" stroke="#8c8cb4" stroke-width="0.12">=</text>
<text x="229.30" y="596" fill="#8c8cb4" stroke="#8c8cb4" stroke-width="0.12">=</text>
<text x="282.30" y="596" fill="#8c8cb4" stroke="#8c8cb4" stroke-width="0.12">=</text>
<text x="335.30" y="596" fill="#8c8cb4" stroke="#8c8cb4" stroke-width="0.12">=</text>
<text x="388.30" y="596" fill="#8c8cb4" stroke="#8c8cb4" stroke-width="0.12">=</text>
<text x="441.30" y="596" fill="#8c8cb4" stroke="#8c8cb4" stroke-width="0.12">=</text>
<text x="494.30" y="596" fill="#8c8cb4" stroke="#8c8cb4" stroke-width="0.12">=</text>
<text x="547.30" y="596" fill="#8c8cb4" stroke="#8c8cb4" stroke-width="0.12">=</text>
<text x="599.30" y="596" fill="#8c8cb4" stroke="#8c8cb4" stroke-width="0.12">=</text>
<text x="652.30" y="596" fill="#8c8cb4" stroke="#8c8cb4" stroke-width="0.12">=</text>
<text x="705.30" y="596" fill="#8c8cb4" stroke="#8c8cb4" stroke-width="0.12">=</text>
<text x="758.30" y="596" fill="#8c8cb4" stroke="#8c8cb4" stroke-width="0.12">=</text>
<text x="811.30" y="596" fill="#8c8cb4" stroke="#8c8cb4" stroke-width="0.12">=</text>
<text x="864.30" y="596" fill="#8c8cb4" stroke="#8c8cb4" stroke-width="0.12">=</text>
<text x="917.30" y="596" fill="#8c8cb4" stroke="#8c8cb4" stroke-width="0.12">=</text>
<text x="129.04" y="610" textLength="23.21" lengthAdjust="spacingAndGlyphs" fill="#0a0a78" stroke="#0a0a78" stroke-width="0.12">Dog</text>
<text transform="translate(176.06 610) scale(1 1.08)" fill="#0a0a78" stroke="#0a0a78" stroke-width="0.12">A</text>
<text transform="translate(228.06 610) scale(1 1.08)" fill="#0a0a78" stroke="#0a0a78" stroke-width="0.12">A</text>
<text transform="translate(281.06 610) scale(1 1.08)" fill="#0a0a78" stroke="#0a0a78" stroke-width="0.12">A</text>
<text transform="translate(335.02 610) scale(1 1.08)" fill="#8c8cb4" stroke="#8c8cb4" stroke-width="0.12">T</text>
<text transform="translate(388.02 610) scale(1 1.08)" fill="#0a0a78" stroke="#0a0a78" stroke-width="0.12">T</text>
<text transform="translate(441.02 610) scale(1 1.08)" fill="#0a0a78" stroke="#0a0a78" stroke-width="0.12">T</text>
<text transform="translate(494.02 610) scale(1 1.08)" fill="#0a0a78" stroke="#0a0a78" stroke-width="0.12">T</text>
<text transform="translate(546.10 610) scale(1 1.08)" fill="#0a0a78" stroke="#0a0a78" stroke-width="0.12">C</text>
<text transform="translate(599.02 610) scale(1 1.08)" fill="#0a0a78" stroke="#0a0a78" stroke-width="0.12">T</text>
<text transform="translate(652.06 610) scale(1 1.08)" fill="#8c8cb4" stroke="#8c8cb4" stroke-width="0.12">A</text>
<text transform="translate(705.06 610) scale(1 1.08)" fill="#8c8cb4" stroke="#8c8cb4" stroke-width="0.12">A</text>
<text transform="translate(758.06 610) scale(1 1.08)" fill="#8c8cb4" stroke="#8c8cb4" stroke-width="0.12">A</text>
<text transform="translate(811.10 610) scale(1 1.08)" fill="#8c8cb4" stroke="#8c8cb4" stroke-width="0.12">C</text>
<text transform="translate(863.14 610) scale(1 1.08)" fill="#8c8cb4" stroke="#8c8cb4" stroke-width="0.12">G</text>
<text transform="translate(917.02 610) scale(1 1.08)" fill="#0a0a78" stroke="#0a0a78" stroke-width="0.12">T</text>
<text x="100.67" y="625" textLength="51.33" lengthAdjust="spacingAndGlyphs" fill="#005a00" stroke="#005a00" stroke-width="0.12">Elephant</text>
<text x="176.30" y="626" fill="#8c8cb4" stroke="#8c8cb4" stroke-width="0.12">=</text>
<text x="229.30" y="626" fill="#8c8cb4" stroke="#8c8cb4" stroke-width="0.12">=</text>
<text x="282.30" y="626" fill="#8c8cb4" stroke="#8c8cb4" stroke-width="0.12">=</text>
<text x="335.30" y="626" fill="#8c8cb4" stroke="#8c8cb4" stroke-width="0.12">=</text>
<text x="388.30" y="626" fill="#8c8cb4" stroke="#8c8cb4" stroke-width="0.12">=</text>
<text x="441.30" y="626" fill="#8c8cb4" stroke="#8c8cb4" stroke-width="0.12">=</text>
<text x="494.30" y="626" fill="#8c8cb4" stroke="#8c8cb4" stroke-width="0.12">=</text>
<text x="547.30" y="626" fill="#8c8cb4" stroke="#8c8cb4" stroke-width="0.12">=</text>
<text x="599.30" y="626" fill="#8c8cb4" stroke="#8c8cb4" stroke-width="0.12">=</text>
<text x="652.30" y="626" fill="#8c8cb4" stroke="#8c8cb4" stroke-width="0.12">=</text>
<text x="705.30" y="626" fill="#8c8cb4" stroke="#8c8cb4" stroke-width="0.12">=</text>
<text x="758.30" y="626" fill="#8c8cb4" stroke="#8c8cb4" stroke-width="0.12">=</text>
<text x="811.30" y="626" fill="#8c8cb4" stroke="#8c8cb4" stroke-width="0.12">=</text>
<text x="864.30" y="626" fill="#8c8cb4" stroke="#8c8cb4" stroke-width="0.12">=</text>
<text x="917.30" y="626" fill="#8c8cb4" stroke="#8c8cb4" stroke-width="0.12">=</text>
<text x="105.03" y="640" textLength="47.47" lengthAdjust="spacingAndGlyphs" fill="#005a00" stroke="#005a00" stroke-width="0.12">Chicken</text>
<text x="176.30" y="641" fill="#8c8cb4" stroke="#8c8cb4" stroke-width="0.12">=</text>
<text x="229.30" y="641" fill="#8c8cb4" stroke="#8c8cb4" stroke-width="0.12">=</text>
<text x="282.30" y="641" fill="#8c8cb4" stroke="#8c8cb4" stroke-width="0.12">=</text>
<text x="335.30" y="641" fill="#8c8cb4" stroke="#8c8cb4" stroke-width="0.12">=</text>
<text x="388.30" y="641" fill="#8c8cb4" stroke="#8c8cb4" stroke-width="0.12">=</text>
<text x="441.30" y="641" fill="#8c8cb4" stroke="#8c8cb4" stroke-width="0.12">=</text>
<text x="494.30" y="641" fill="#8c8cb4" stroke="#8c8cb4" stroke-width="0.12">=</text>
<text x="547.30" y="641" fill="#8c8cb4" stroke="#8c8cb4" stroke-width="0.12">=</text>
<text x="599.30" y="641" fill="#8c8cb4" stroke="#8c8cb4" stroke-width="0.12">=</text>
<text x="652.30" y="641" fill="#8c8cb4" stroke="#8c8cb4" stroke-width="0.12">=</text>
<text x="705.30" y="641" fill="#8c8cb4" stroke="#8c8cb4" stroke-width="0.12">=</text>
<text x="758.30" y="641" fill="#8c8cb4" stroke="#8c8cb4" stroke-width="0.12">=</text>
<text x="811.30" y="641" fill="#8c8cb4" stroke="#8c8cb4" stroke-width="0.12">=</text>
<text x="864.30" y="641" fill="#8c8cb4" stroke="#8c8cb4" stroke-width="0.12">=</text>
<text x="917.30" y="641" fill="#8c8cb4" stroke="#8c8cb4" stroke-width="0.12">=</text>
<text x="84.20" y="655" textLength="66.90" lengthAdjust="spacingAndGlyphs" fill="#0a0a78" stroke="#0a0a78" stroke-width="0.12">X_tropicalis</text>
<text x="176.30" y="656" fill="#8c8cb4" stroke="#8c8cb4" stroke-width="0.12">=</text>
<text x="229.30" y="656" fill="#8c8cb4" stroke="#8c8cb4" stroke-width="0.12">=</text>
<text x="282.30" y="656" fill="#8c8cb4" stroke="#8c8cb4" stroke-width="0.12">=</text>
<text x="335.30" y="656" fill="#8c8cb4" stroke="#8c8cb4" stroke-width="0.12">=</text>
<text x="388.30" y="656" fill="#8c8cb4" stroke="#8c8cb4" stroke-width="0.12">=</text>
<text x="441.30" y="656" fill="#8c8cb4" stroke="#8c8cb4" stroke-width="0.12">=</text>
<text x="494.30" y="656" fill="#8c8cb4" stroke="#8c8cb4" stroke-width="0.12">=</text>
<text x="547.30" y="656" fill="#8c8cb4" stroke="#8c8cb4" stroke-width="0.12">=</text>
<text x="599.30" y="656" fill="#8c8cb4" stroke="#8c8cb4" stroke-width="0.12">=</text>
<text x="652.30" y="656" fill="#8c8cb4" stroke="#8c8cb4" stroke-width="0.12">=</text>
<text x="705.30" y="656" fill="#8c8cb4" stroke="#8c8cb4" stroke-width="0.12">=</text>
<text x="758.30" y="656" fill="#8c8cb4" stroke="#8c8cb4" stroke-width="0.12">=</text>
<text x="811.30" y="656" fill="#8c8cb4" stroke="#8c8cb4" stroke-width="0.12">=</text>
<text x="864.30" y="656" fill="#8c8cb4" stroke="#8c8cb4" stroke-width="0.12">=</text>
<text x="917.30" y="656" fill="#8c8cb4" stroke="#8c8cb4" stroke-width="0.12">=</text>
<text x="98.05" y="670" textLength="54.45" lengthAdjust="spacingAndGlyphs" fill="#005a00" stroke="#005a00" stroke-width="0.12">Zebrafish</text>
<text x="176.30" y="671" fill="#8c8cb4" stroke="#8c8cb4" stroke-width="0.12">=</text>
<text x="229.30" y="671" fill="#8c8cb4" stroke="#8c8cb4" stroke-width="0.12">=</text>
<text x="282.30" y="671" fill="#8c8cb4" stroke="#8c8cb4" stroke-width="0.12">=</text>
<text x="335.30" y="671" fill="#8c8cb4" stroke="#8c8cb4" stroke-width="0.12">=</text>
<text x="388.30" y="671" fill="#8c8cb4" stroke="#8c8cb4" stroke-width="0.12">=</text>
<text x="441.30" y="671" fill="#8c8cb4" stroke="#8c8cb4" stroke-width="0.12">=</text>
<text x="494.30" y="671" fill="#8c8cb4" stroke="#8c8cb4" stroke-width="0.12">=</text>
<text x="547.30" y="671" fill="#8c8cb4" stroke="#8c8cb4" stroke-width="0.12">=</text>
<text x="599.30" y="671" fill="#8c8cb4" stroke="#8c8cb4" stroke-width="0.12">=</text>
<text x="652.30" y="671" fill="#8c8cb4" stroke="#8c8cb4" stroke-width="0.12">=</text>
<text x="705.30" y="671" fill="#8c8cb4" stroke="#8c8cb4" stroke-width="0.12">=</text>
<text x="758.30" y="671" fill="#8c8cb4" stroke="#8c8cb4" stroke-width="0.12">=</text>
<text x="811.30" y="671" fill="#8c8cb4" stroke="#8c8cb4" stroke-width="0.12">=</text>
<text x="864.30" y="671" fill="#8c8cb4" stroke="#8c8cb4" stroke-width="0.12">=</text>
<text x="917.30" y="671" fill="#8c8cb4" stroke="#8c8cb4" stroke-width="0.12">=</text>
</g>
<g id="track-rmsk" aria-label="RepeatMasker">
<text x="440.92" y="686" textLength="223.11" lengthAdjust="spacingAndGlyphs" stroke="#000" stroke-width="0.12">Repeating Elements by RepeatMasker</text>
<text x="68.45" y="700" textLength="83.80" lengthAdjust="spacingAndGlyphs" stroke="#000" stroke-width="0.12">RepeatMasker</text>
<rect x="156" y="688" width="793" height="15" fill="#000"/>
</g>
</svg>
</body></html>
